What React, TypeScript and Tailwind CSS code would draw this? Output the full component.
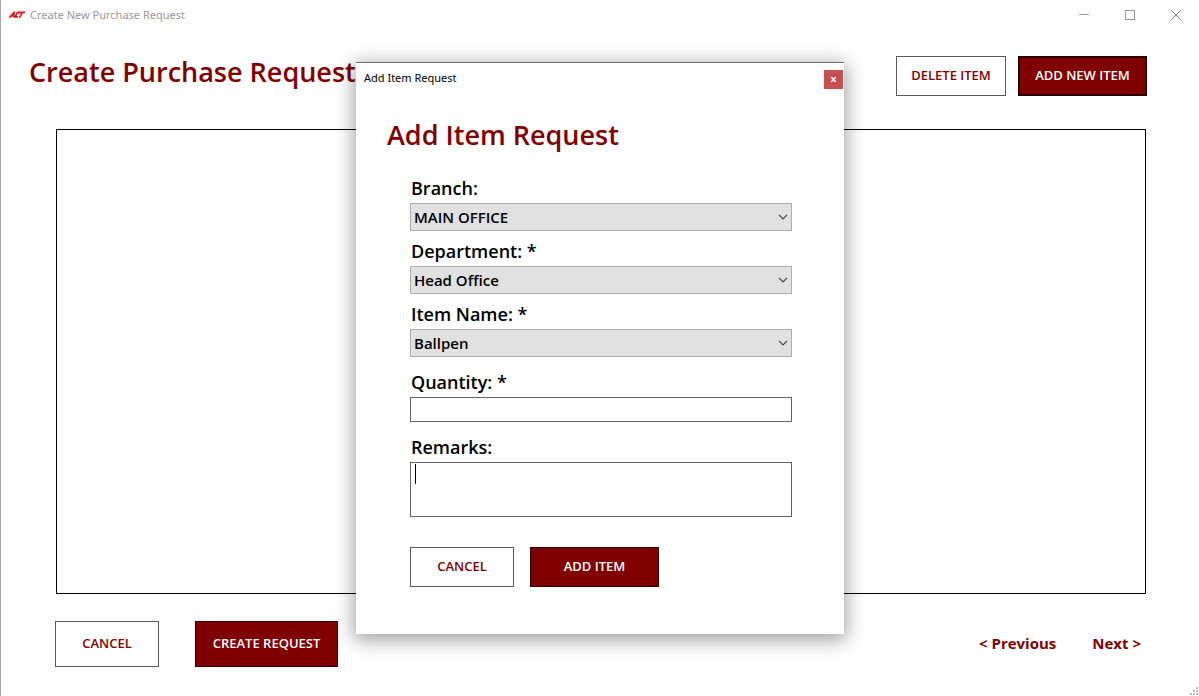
import React from "react";

const outline =
  "border border-[#5a5a5a] bg-white text-[#800000] text-[13px] font-semibold whitespace-nowrap";
const solid =
  "border-[#2a0000] bg-[#800000] text-white text-[13px] font-semibold whitespace-nowrap";
const fieldLabel = "block pb-0.5 pl-px text-[18px] leading-[26px] font-semibold text-black";

function Logo() {
  return (
    <svg width="16" height="8" viewBox="0 0 16 8" fill="none" stroke="#e3151b" strokeWidth="1.6" aria-hidden="true">
      <path d="M0.4 6.6 L5 1.4 V6.6 M2 5 H5" />
      <path d="M10.6 1.6 H8.2 L6.2 5.9 H9" />
      <path d="M9.4 1.4 H16 M13.4 1.4 L10.4 6.8" />
    </svg>
  );
}

function SelectField({ id, label, value }: { id: string; label: string; value: string }) {
  return (
    <div>
      <label htmlFor={id} className={fieldLabel}>
        {label}
      </label>
      <div className="grid items-center">
        <select
          id={id}
          defaultValue={value}
          className="col-start-1 row-start-1 h-7 w-full appearance-none rounded-none border border-[#adadad] bg-[#e1e1e1] pr-6 pl-[3px] text-[15px] font-semibold text-black outline-none"
        >
          <option>{value}</option>
        </select>
        <svg
          className="pointer-events-none col-start-1 row-start-1 mr-1 justify-self-end"
          width="10"
          height="6"
          viewBox="0 0 10 6"
          fill="none"
          stroke="#444"
          strokeWidth="1.2"
          aria-hidden="true"
        >
          <path d="M1 0.8 L5 4.8 L9 0.8" />
        </svg>
      </div>
    </div>
  );
}

function AddItemDialog() {
  return (
    <section
      role="dialog"
      aria-labelledby="dialog-title"
      className="flex w-[488px] flex-col border-t border-[#6b6b6b] bg-white pb-[47px] shadow-[0_4px_18px_2px_rgba(0,0,0,0.38)]"
    >
      <div className="flex h-[30px] items-center justify-between pr-px pl-2">
        <span className="font-['Noto_Sans','Open_Sans',sans-serif] text-[11px] text-black">Add Item Request</span>
        <button
          aria-label="Close dialog"
          className="mt-0.5 flex h-[19px] w-[19px] items-center justify-center bg-[#c75050]"
        >
          <svg width="5" height="5" viewBox="0 0 5 5" stroke="#fff" strokeWidth="1.5" aria-hidden="true">
            <path d="M0.3 0 L4.7 5 M4.7 0 L0.3 5" />
          </svg>
        </button>
      </div>
      <h2 id="dialog-title" className="mt-6 pl-[31px] text-[27px] leading-9 font-semibold text-[#800000]">
        Add Item Request
      </h2>
      <form className="mt-[22px] flex flex-col pr-[52px] pl-[54px]" onSubmit={(e) => e.preventDefault()}>
        <div className="flex flex-col gap-[7px]">
          <SelectField id="branch" label="Branch:" value="MAIN OFFICE" />
          <SelectField id="department" label="Department: *" value="Head Office" />
          <SelectField id="item" label="Item Name: *" value="Ballpen" />
        </div>
        <div className="mt-3 flex flex-col gap-3">
          <div>
            <label htmlFor="quantity" className={fieldLabel}>
              Quantity: *
            </label>
            <input id="quantity" className="block h-[25px] w-full border border-[#646464] px-1 outline-none" />
          </div>
          <div>
            <label htmlFor="remarks" className={fieldLabel}>
              Remarks:
            </label>
            <div className="relative">
              <textarea
                id="remarks"
                className="block h-[55px] w-full resize-none border border-[#646464] px-1 caret-transparent outline-none"
              />
              <span className="pointer-events-none absolute top-0.5 left-[5px] h-5 w-px bg-black" />
            </div>
          </div>
        </div>
        <div className="mt-[30px] flex gap-4">
          <button type="button" className={`${outline} h-10 w-[104px]`}>
            CANCEL
          </button>
          <button type="submit" className={`${solid} h-10 w-[129px] border`}>
            ADD ITEM
          </button>
        </div>
      </form>
    </section>
  );
}

export default function App() {
  return (
    <div className="relative flex min-h-screen flex-col border-l border-[#a9a9a9] bg-white font-['Open_Sans','Noto_Sans',sans-serif]">
      <header className="flex h-[30px] items-center pr-[18px] pl-2">
        <Logo />
        <span className="ml-[5px] font-['Noto_Sans','Open_Sans',sans-serif] text-[11px] text-[#999]">
          Create New Purchase Request
        </span>
        <div className="ml-auto flex items-center gap-9">
          <button aria-label="Minimize">
            <svg width="10" height="10" viewBox="0 0 10 10" stroke="#999" aria-hidden="true">
              <path d="M0 4.5 H10" />
            </svg>
          </button>
          <button aria-label="Maximize">
            <svg width="10" height="10" viewBox="0 0 10 10" fill="none" stroke="#999" aria-hidden="true">
              <rect x="0.5" y="0.5" width="9" height="9" />
            </svg>
          </button>
          <button aria-label="Close">
            <svg width="10" height="10" viewBox="0 0 10 10" stroke="#888" aria-hidden="true">
              <path d="M0 0 L10 10 M10 0 L0 10" />
            </svg>
          </button>
        </div>
      </header>

      <div className="mt-[26px] flex items-start justify-between pr-[52px] pl-7">
        <h1 className="text-[27px] leading-8 font-semibold text-[#800000]">Create Purchase Request</h1>
        <div className="flex gap-3">
          <button className={`${outline} h-10 w-[110px]`}>DELETE ITEM</button>
          <button className={`${solid} h-10 w-[129px] border-2`}>ADD NEW ITEM</button>
        </div>
      </div>

      <main className="mt-[33px] mr-[53px] ml-[55px] flex-1 border border-black" />

      <footer className="mt-[27px] mb-[29px] flex items-center justify-between pr-[58px] pl-[54px]">
        <div className="flex gap-9">
          <button className={`${outline} h-[46px] w-[104px]`}>CANCEL</button>
          <button className={`${solid} h-[46px] w-[143px] border`}>CREATE REQUEST</button>
        </div>
        <nav className="flex gap-9 pb-0.5 text-[15px] font-bold text-[#800000]">
          <a href="#previous">&lt; Previous</a>
          <a href="#next">Next &gt;</a>
        </nav>
      </footer>

      <svg className="absolute right-[1px] bottom-[1px]" width="8" height="8" viewBox="0 0 8 8" fill="#bcbcbc" aria-hidden="true">
        <path d="M6 0h2v2h-2z M3 3h2v2h-2z M6 3h2v2h-2z M0 6h2v2h-2z M3 6h2v2h-2z M6 6h2v2h-2z" />
      </svg>

      <div className="absolute inset-0 flex items-center justify-center">
        <AddItemDialog />
      </div>
    </div>
  );
}
